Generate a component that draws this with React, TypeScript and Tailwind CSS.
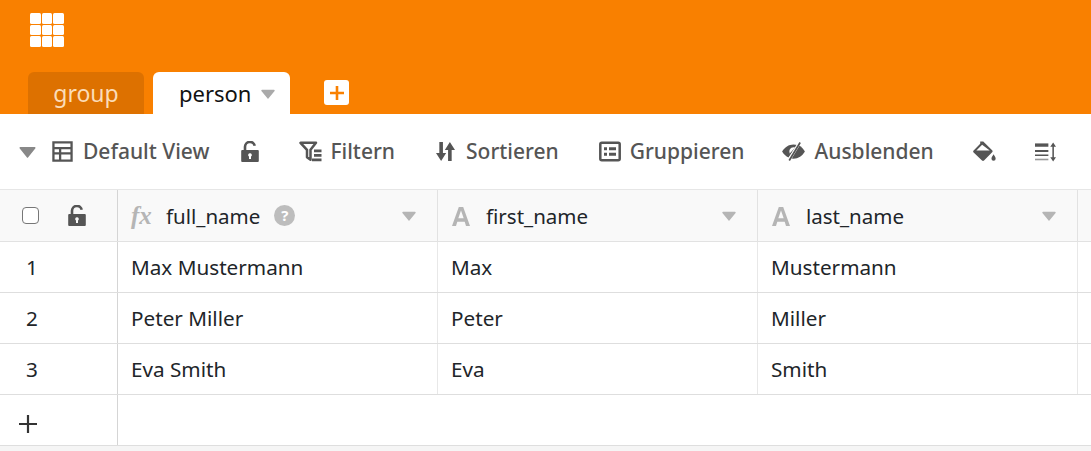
import React from 'react';

const font = { fontFamily: '"Noto Sans", "Open Sans", sans-serif' };

function Caret({ className }: { className: string }) {
  return (
    <svg viewBox="0 0 14 10" className={className}>
      <path d="M1 .8h12a.7.7 0 0 1 .6 1.100L7.600 9.300a.7.7 0 0 1-1.200 0L.4 1.900A.7.700 0 0 1 1 .8z" fill="currentColor" />
    </svg>
  );
}

function LockOpen({ className }: { className: string }) {
  return (
    <svg viewBox="0 0 18 21" className={className}>
      <path d="M4 10V5.800a4.900 4.900 0 0 1 9.700-1" fill="none" stroke="currentColor" strokeWidth="2.600" />
      <path fillRule="evenodd" d="M1.200 9h15.600a1 1 0 0 1 1 1v10a1 1 0 0 1-1 1H1.200a1 1 0 0 1-1-1V10a1 1 0 0 1 1-1zM9 12.300a1.800 1.800 0 0 0-1 3.300V18h2v-2.400a1.800 1.800 0 0 0-1-3.300z" fill="currentColor" />
    </svg>
  );
}

function TableIcon() {
  return (
    <svg viewBox="0 0 22 22" className="h-[21px] w-[21px] text-[#555]">
      <path d="M1.500 1.500h19v19h-19zM1.500 7.500h19M1.500 13h19M8.500 7.500v13" fill="none" stroke="currentColor" strokeWidth="2.400" />
    </svg>
  );
}

function FilterIcon() {
  return (
    <svg viewBox="0 0 23 21" className="h-[21px] w-[23px] text-[#555]">
      <path d="M1.500 1.800h15.500l-5.500 7v10l-3.500-2.600V8.800z" fill="none" stroke="currentColor" strokeWidth="2.500" strokeLinejoin="round" />
      <path d="M15 8.500h7.500v2.800H15zM15 13h7.500v2.800H15zM13 17.500h9.500v2.800H13z" fill="currentColor" />
    </svg>
  );
}

function SortIcon() {
  return (
    <svg viewBox="0 0 20 22" className="h-[21px] w-[19px] text-[#555]">
      <path d="M3.500 1h3.800v11.500h3.400L5.400 21 0 12.500h3.500zM12.700 21V9.500H9.300L14.600 1 20 9.500h-3.500V21z" fill="currentColor" />
    </svg>
  );
}

function GroupIcon() {
  return (
    <svg viewBox="0 0 22 21" className="h-[21px] w-[22px] text-[#555]">
      <rect x="1.300" y="1.800" width="19.400" height="17.400" rx="1.500" fill="none" stroke="currentColor" strokeWidth="2.500" />
      <path d="M5 6.200h3v3H5zM10 6.200h7v3h-7zM5 11.700h3v3H5zM10 11.700h7v3h-7z" fill="currentColor" />
    </svg>
  );
}

function EyeOffIcon() {
  return (
    <svg viewBox="0 0 24 20" className="h-[19px] w-[23px] text-[#555]">
      <path fillRule="evenodd" d="M0 10c2.700-4.600 7-7.500 12-7.500 1.500 0 2.800.2 4 .7L6.800 16.300C4 15 1.700 12.800 0 10zM12 5.500a4.500 4.500 0 0 0-4 6.500l5.800-6.200a4.500 4.500 0 0 0-1.800-.3z" fill="currentColor" />
      <path d="M24 10c-2.700 4.600-7 7.500-12 7.500-1.300 0-2.500-.2-3.500-.5l9.300-13.300C20.400 5 22.400 7.300 24 10z" fill="currentColor" />
      <path d="M18.500 .5L7 19.500" stroke="#fff" strokeWidth="3.200" />
      <path d="M19 .5L7.500 19.500" stroke="currentColor" strokeWidth="1.800" />
    </svg>
  );
}

function PaintIcon() {
  return (
    <svg viewBox="0 0 24 22" className="h-[21px] w-[23px] text-[#555]">
      <path fillRule="evenodd" d="M7.500 .5h3.200l9.300 9.300a1.500 1.500 0 0 1 0 2.100l-8.500 8.600a1.500 1.500 0 0 1-2.100 0L.6 12a1.500 1.500 0 0 1 0-2.100l6.900-6.900zM9.500 4L3.500 10h14z" fill="currentColor" />
      <path d="M21.500 14c1 1.800 2.200 3 2.200 4.500a2.200 2.200 0 0 1-4.400 0c0-1.500 1.200-2.700 2.200-4.500z" fill="currentColor" />
    </svg>
  );
}

function RowHeightIcon() {
  return (
    <svg viewBox="0 0 22 20" className="h-[20px] w-[21px] text-[#555]">
      <path d="M0 1h14v3.500H0z" fill="currentColor" />
      <path d="M0 8h14v2H0zM0 12.500h14v1.700H0z" fill="currentColor" />
      <path d="M0 17h14v1.700H0z" fill="#999" />
      <path d="M19 0l3 4.500h-2.200v11H22L19 20l-3-4.500h2.200v-11H16z" fill="currentColor" />
    </svg>
  );
}

function HelpBadge() {
  return (
    <span className="ml-[14px] flex h-[21px] w-[21px] items-center justify-center rounded-full bg-[#bdbdbd] text-[15px] font-bold leading-none text-white">
      ?
    </span>
  );
}

function ToolbarItem({ icon, label, className }: { icon: React.ReactNode; label: string; className: string }) {
  return (
    <div className={`flex items-center text-[21px] font-medium text-[#555] ${className}`}>
      {icon}
      <span>{label}</span>
    </div>
  );
}

const columns = [
  { name: 'full_name', formula: true },
  { name: 'first_name', formula: false },
  { name: 'last_name', formula: false },
];

const rows = [
  ['1', 'Max Mustermann', 'Max', 'Mustermann'],
  ['2', 'Peter Miller', 'Peter', 'Miller'],
  ['3', 'Eva Smith', 'Eva', 'Smith'],
];

export default function App() {
  return (
    <div className="h-[451px] w-[1091px] overflow-hidden bg-white" style={font}>
      {/* Header */}
      <div className="flex h-[114px] flex-col bg-[#f98000]">
        <div className="h-[72px] pl-[30px] pt-[13px]">
          <div className="grid h-[34px] w-[34px] grid-cols-3 gap-[1px]">
            {Array.from({ length: 9 }).map((_, i) => (
              <div key={i} className="rounded-[1.500px] bg-white" />
            ))}
          </div>
        </div>
        <div className="flex h-[42px] pl-[28px]">
          <div className="flex w-[116px] justify-center rounded-t-[6px] bg-[#dd7100] pt-[5px] text-[23px] leading-[32px] text-[#fbdcb8]">
            group
          </div>
          <div className="ml-[9px] flex w-[137px] rounded-t-[6px] bg-white pl-[26px] pt-[5px] text-[22px] leading-[32px] text-[#111]">
            person
            <Caret className="ml-[10px] mt-[12px] h-[10px] w-[14px] text-[#aaa]" />
          </div>
          <div className="ml-[34px] mt-[8px] flex h-[25px] w-[25px] items-center justify-center rounded-[3px] bg-white">
            <svg viewBox="0 0 16 16" className="h-[16px] w-[16px] text-[#f98000]">
              <path d="M6.700 1h2.600v5.700H15v2.600H9.300V15H6.700V9.300H1V6.700h5.700z" fill="currentColor" />
            </svg>
          </div>
        </div>
      </div>

      {/* Toolbar */}
      <div className="flex h-[76px] items-center border-b border-[#e6e6e6] pl-[19px]">
        <Caret className="h-[12px] w-[17px] text-[#888]" />
        <ToolbarItem icon={<><TableIcon /><span className="w-[10px]" /></>} label="Default View" className="ml-[16px]" />
        <LockOpen className="ml-[32px] h-[21px] w-[18px] text-[#555]" />
        <ToolbarItem icon={<><FilterIcon /><span className="w-[8px]" /></>} label="Filtern" className="ml-[40px]" />
        <ToolbarItem icon={<><SortIcon /><span className="w-[11px]" /></>} label="Sortieren" className="ml-[41px]" />
        <ToolbarItem icon={<><GroupIcon /><span className="w-[9px]" /></>} label="Gruppieren" className="ml-[40px]" />
        <ToolbarItem icon={<><EyeOffIcon /><span className="w-[9px]" /></>} label="Ausblenden" className="ml-[38px]" />
        <div className="ml-[39px]"><PaintIcon /></div>
        <div className="ml-[39px]"><RowHeightIcon /></div>
      </div>

      {/* Table head */}
      <div className="flex h-[52px] border-b border-[#e2e2e2] bg-[#f9f9f9] text-[#212529]">
        <div className="flex w-[118px] items-center border-r border-[#d5d5d5] pl-[22px]">
          <div className="h-[17px] w-[17px] rounded-[4px] border-[1.500px] border-[#777] bg-white" />
          <LockOpen className="ml-[29px] h-[21px] w-[18px] text-[#555]" />
        </div>
        {columns.map((col) => (
          <div key={col.name} className="flex w-[320px] items-center border-r border-[#e2e2e2] pl-[13px] pr-[21px] text-[20.500px]">
            {col.formula ? (
              <span className="w-[35px] text-[25px] font-bold italic leading-none text-[#b5b5b5]" style={{ fontFamily: '"Liberation Serif", serif' }}>
                fx
              </span>
            ) : (
              <svg viewBox="0 0 20 20" className="mr-[15px] h-[20px] w-[20px] text-[#b5b5b5]">
                <path d="M7.800 1h4.400L19 20h-4l-1.300-4.300H6.300L5 20H1zM7.300 12.300h5.400L10 4.600z" fill="currentColor" />
              </svg>
            )}
            <span className="pt-[1px]">{col.name}</span>
            {col.formula && <HelpBadge />}
            <Caret className="ml-auto h-[10px] w-[14px] text-[#b5b5b5]" />
          </div>
        ))}
      </div>

      {/* Table rows */}
      {rows.map((row) => (
        <div key={row[0]} className="flex h-[51px] border-b border-[#dedede] text-[20.700px] text-[#212529]">
          <div className="flex w-[118px] items-center border-r border-[#d5d5d5] pl-[26px] pt-[2px]">{row[0]}</div>
          {row.slice(1).map((cell, i) => (
            <div key={i} className="flex w-[320px] items-center border-r border-[#e8e8e8] pl-[13px] pt-[2px]">
              {cell}
            </div>
          ))}
        </div>
      ))}

      {/* Add row */}
      <div className="flex h-[51px] border-b border-[#dedede]">
        <div className="flex w-[118px] items-center border-r border-[#d5d5d5] pl-[18px] pt-[7px]">
          <svg viewBox="0 0 20 20" className="h-[20px] w-[20px] text-[#333]">
            <path d="M8.900 1h2.200v7.900H19v2.200h-7.900V19H8.900v-7.900H1V8.900h7.900z" fill="currentColor" />
          </svg>
        </div>
      </div>
      <div className="h-[6px] bg-[#f5f5f5]" />
    </div>
  );
}
